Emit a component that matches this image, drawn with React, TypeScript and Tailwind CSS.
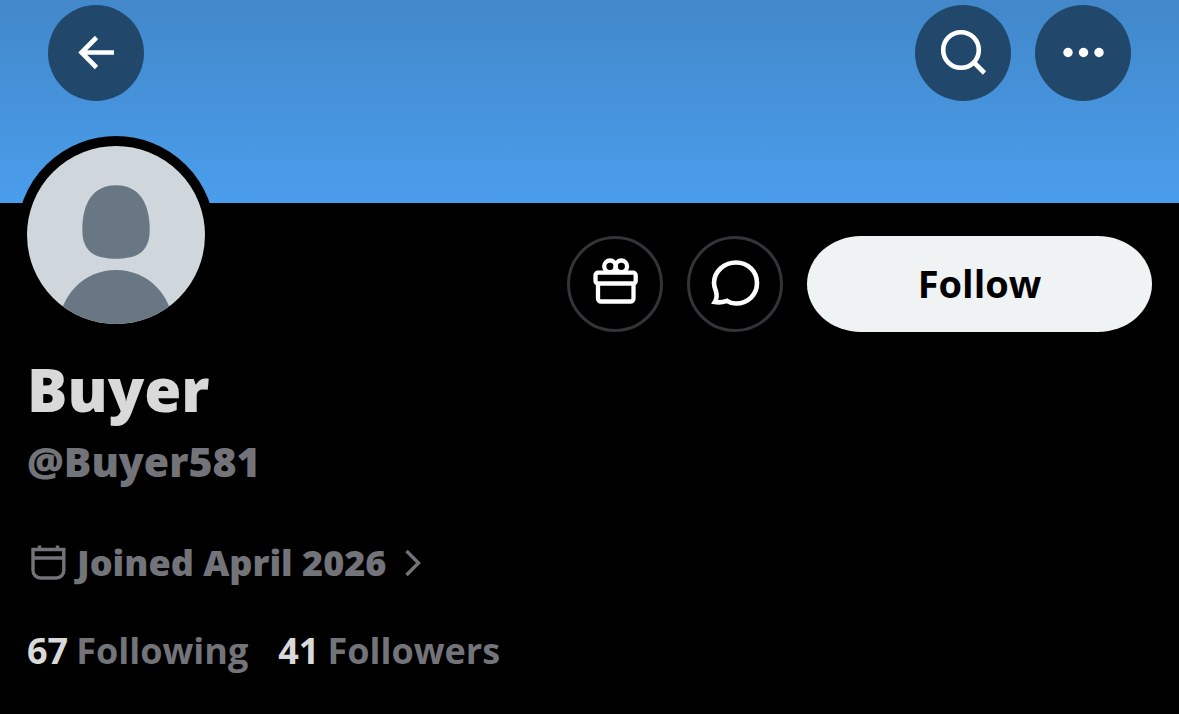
const stats = [
  { label: "Following", value: "67" },
  { label: "Followers", value: "41" },
];

function BackIcon() {
  return (
    <svg viewBox="0 0 96 96" className="size-full" fill="none" stroke="currentColor" strokeWidth="4.6" aria-hidden="true">
      <path d="M48.5 32.5 33.5 47.5 48.5 62.5M33 47.5H66" />
    </svg>
  );
}

function SearchIcon() {
  return (
    <svg viewBox="0 0 96 96" className="size-full" fill="none" stroke="currentColor" strokeWidth="4.6" aria-hidden="true">
      <circle cx="46" cy="45" r="17.8" />
      <path d="M58.5 57 69.5 68" />
    </svg>
  );
}

function MoreIcon() {
  return (
    <svg viewBox="0 0 96 96" className="size-full" fill="currentColor" aria-hidden="true">
      <circle cx="33" cy="47.5" r="4.7" />
      <circle cx="48.5" cy="47.5" r="4.7" />
      <circle cx="64" cy="47.5" r="4.7" />
    </svg>
  );
}

function GiftIcon() {
  return (
    <svg viewBox="3 3 90 90" className="size-full" fill="none" stroke="currentColor" strokeWidth="4.3" aria-hidden="true">
      <circle cx="43" cy="30.3" r="5.8" />
      <circle cx="54.3" cy="30.3" r="5.8" />
      <rect x="28.5" y="36.7" width="40.2" height="10.8" rx="2.5" />
      <path d="M31 47.5V62.5a3 3 0 0 0 3 3H63.5a3 3 0 0 0 3-3V47.5" />
    </svg>
  );
}

function MessageIcon() {
  return (
    <svg viewBox="3 3 90 90" className="size-full" fill="none" stroke="currentColor" strokeWidth="4.6" aria-hidden="true">
      <path d="M49 26.5C61 26.5 70 35.5 70 47S61 67.5 49 67.5C45.5 67.5 42.5 66.5 40 64.8C36 66.2 32 66.8 27.8 66C30 62.5 30 59 29 55.5C27.8 52.5 27 50.5 27 47C27 35.5 37 26.5 49 26.5Z" />
    </svg>
  );
}

function CalendarIcon() {
  return (
    <svg viewBox="0 0 42 42" className="size-[42px]" fill="none" stroke="currentColor" strokeWidth="3.4" aria-hidden="true">
      <path d="M6 7.5H36.8V28.5a7.5 7.5 0 0 1-7.5 7.5H13.5a7.5 7.5 0 0 1-7.5-7.5ZM6 16H36.8M12.5 3.5V8M30.5 3.5V8" />
    </svg>
  );
}

function ChevronIcon() {
  return (
    <svg viewBox="0 0 18 28" className="h-7 w-[18px]" fill="none" stroke="currentColor" strokeWidth="3.4" aria-hidden="true">
      <path d="M2.5 2 14.5 14 2.5 26" />
    </svg>
  );
}

function Avatar() {
  return (
    <div className="relative -mt-[67px] -ml-[10px] size-[198px] shrink-0 overflow-hidden rounded-full border-10 border-black bg-[#cfd6dc]">
      <svg viewBox="0 0 178 178" className="size-full" fill="#697784" role="img" aria-label="Buyer">
        <path d="M89 39.3C112 39.3 122.7 57 122.7 84C122.7 106 110 112.7 89 112.7S55.3 106 55.3 84C55.3 57 66 39.3 89 39.3Z" />
        <circle cx="89" cy="181" r="57" />
      </svg>
    </div>
  );
}

export default function App() {
  return (
    <div className="min-h-screen bg-black font-['Open_Sans','Noto_Sans',sans-serif] font-bold text-[#727479]">
      {/* Banner */}
      <header className="flex h-[203px] items-start justify-between bg-linear-to-b from-[#4288ca] to-[#4a9dec] px-12 pt-[5px] text-white">
        <button aria-label="Back" className="size-24 rounded-full bg-[#21486b]">
          <BackIcon />
        </button>
        <div className="flex gap-6">
          <button aria-label="Search" className="size-24 rounded-full bg-[#21486b]">
            <SearchIcon />
          </button>
          <button aria-label="More" className="size-24 rounded-full bg-[#21486b]">
            <MoreIcon />
          </button>
        </div>
      </header>

      <main className="px-[27px] pb-8">
        {/* Avatar and actions */}
        <div className="flex items-start justify-between">
          <Avatar />
          <div className="flex gap-6 pt-[33px] text-white">
            <button aria-label="Send a gift" className="size-24 rounded-full border-3 border-[#333437]">
              <GiftIcon />
            </button>
            <button aria-label="Message" className="size-24 rounded-full border-3 border-[#333437]">
              <MessageIcon />
            </button>
            <button className="h-24 w-[345px] rounded-[54px/48px] bg-[#eff3f4] pb-0.5 text-[38px] text-black">
              Follow
            </button>
          </div>
        </div>

        {/* Name and handle */}
        <h1 className="mt-[15px] text-[60px] leading-[80px] font-extrabold text-[#d9d9d9]">Buyer</h1>
        <p className="mt-2 text-[41px] leading-[48px] font-extrabold">@Buyer581</p>

        <button className="mt-[54px] flex items-center text-[36px] leading-[48px] font-extrabold">
          <CalendarIcon />
          <span className="ml-2">Joined April 2026</span>
          <span className="ml-[18px]">
            <ChevronIcon />
          </span>
        </button>

        {/* Counts */}
        <div className="mt-10 flex gap-[30px] text-[36px] leading-[48px]">
          {stats.map((stat) => (
            <a key={stat.label} href="#" className="flex gap-2">
              <span className="text-[#d9d9d9]">{stat.value}</span>
              <span>{stat.label}</span>
            </a>
          ))}
        </div>
      </main>
    </div>
  );
}
